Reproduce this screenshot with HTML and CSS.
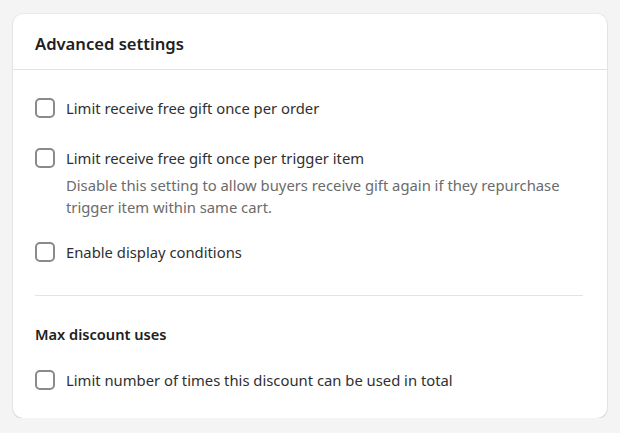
FILE: index.html
```html
<!DOCTYPE html>
<html lang="en">
<head>
<meta charset="utf-8">
<link rel="stylesheet" href="styles.css">
</head>
<body>
<div class="card">
  <div class="card-header">
    <h2 class="card-title">Advanced settings</h2>
  </div>
  <div class="card-body">
    <div class="options">
      <label class="option option-first">
        <span class="box"></span>
        <span class="option-text">
          <span class="option-label">Limit receive free gift once per order</span>
        </span>
      </label>
      <label class="option option-second">
        <span class="box"></span>
        <span class="option-text">
          <span class="option-label">Limit receive free gift once per trigger item</span>
          <span class="help">Disable this setting to allow buyers receive gift again if they repurchase trigger item within same cart.</span>
        </span>
      </label>
      <label class="option option-third">
        <span class="box"></span>
        <span class="option-text">
          <span class="option-label">Enable display conditions</span>
        </span>
      </label>
    </div>
    <hr class="divider">
    <h3 class="section-title">Max discount uses</h3>
    <label class="option option-last">
      <span class="box"></span>
      <span class="option-text">
        <span class="option-label">Limit number of times this discount can be used in total</span>
      </span>
    </label>
  </div>
</div>
</body>
</html>
```
FILE: styles.css
```css
html, body {
  margin: 0;
  padding: 0;
  background: #f4f4f4;
}
body {
  font-family: "Noto Sans", sans-serif;
  color: #303030;
  padding: 14px 13px 0 13px;
}
.card {
  width: 594px;
  box-sizing: border-box;
  background: #ffffff;
  border-radius: 10px;
  box-shadow: 0 1px 2px rgba(0,0,0,0.12), 0 0 0 1px rgba(0,0,0,0.03);
}
.card-header {
  height: 56px;
  box-sizing: border-box;
  border-bottom: 1px solid #e3e3e3;
  padding: 0 22px;
  display: flex;
  align-items: center;
}
.card-title {
  margin: 0;
  font-size: 16.6px;
  font-weight: 600;
  color: #202020;
  line-height: 20px;
  padding-top: 4px;
}
.card-body {
  padding: 28px 24px 28px 22px;
}
.options {
  display: flex;
  flex-direction: column;
}
.option {
  display: flex;
  align-items: flex-start;
  gap: 11px;
  font-size: 14.8px;
  line-height: 20px;
}
.option-second { margin-top: 30px; }
.option-third { margin-top: 24px; }
.box {
  flex: none;
  width: 20px;
  height: 20px;
  box-sizing: border-box;
  border: 2px solid #8a8a8a;
  border-radius: 5px;
  background: #fff;
}
.option-text {
  display: flex;
  flex-direction: column;
}
.option-label {
  color: #303030;
}
.help {
  margin-top: 6px;
  color: #6b6b6b;
  line-height: 22px;
  max-width: 500px;
}
.divider {
  border: 0;
  border-top: 1px solid #e3e3e3;
  margin: 33px 0 0 0;
}
.section-title {
  margin: 28px 0 0 0;
  font-size: 14.6px;
  font-weight: 600;
  line-height: 20px;
  color: #202020;
}
.option-last { margin-top: 26px; }
```
